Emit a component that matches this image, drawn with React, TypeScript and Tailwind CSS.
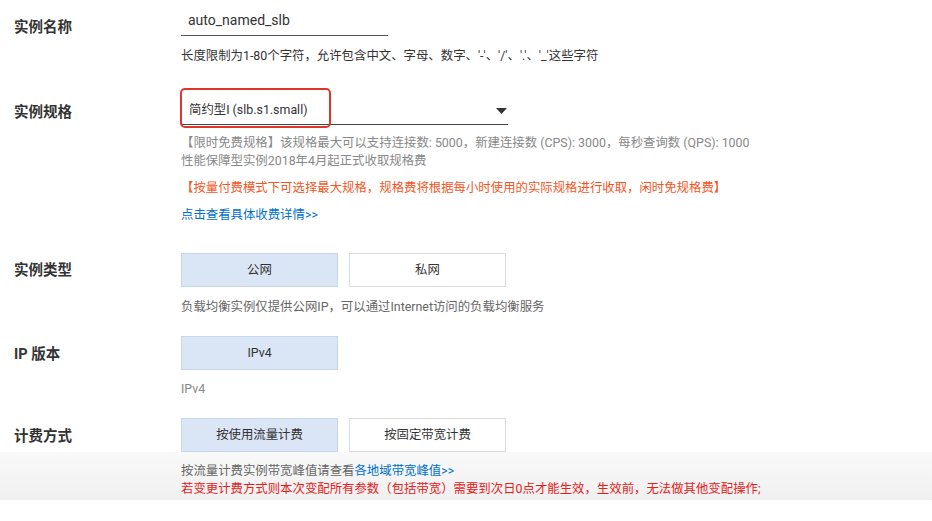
import React from "react";

const font = { fontFamily: 'Roboto, "Noto Sans CJK SC", sans-serif' };

export default function App() {
  return (
    <div className="w-[932px] h-[521px] overflow-hidden bg-white text-[#333]" style={font}>
      {/* 实例名称 */}
      <div className="flex pt-[6px]">
        <div className="w-[181px] shrink-0 pl-[14px] pt-[12px] text-[14.5px] leading-[20px] font-bold text-[#333]">实例名称</div>
        <div className="flex flex-col">
          <div className="w-[207px] h-[30px] border-b border-[#555] flex items-center pl-[7px] text-[14px] text-[#333]">
            auto_named_slb
          </div>
          <div className="mt-[11px] text-[12.4px] leading-[18px] text-[#333]">
            长度限制为1-80个字符，允许包含中文、字母、数字、'-'、'/'、'.'、'_'这些字符
          </div>
        </div>
      </div>

      {/* 实例规格 */}
      <div className="flex mt-[32px]">
        <div className="w-[181px] shrink-0 pl-[14px] pt-[6px] text-[14.5px] leading-[20px] font-bold text-[#333]">实例规格</div>
        <div className="flex flex-col">
          <div className="relative w-[327px] h-[28px] border-b border-[#444] flex items-center justify-between pl-[8px] pr-[1px] text-[12.4px] text-[#333]">
            <span>简约型I (slb.s1.small)</span>
            <svg width="11" height="6" viewBox="0 0 11 6">
              <path d="M0 0 L11 0 L5.5 6 Z" fill="#333" />
            </svg>
            <div className="absolute left-[-1px] top-[-9px] w-[151px] h-[40px] border-2 border-[#e0352b] rounded-[5px]" />
          </div>
          <div className="mt-[9px] text-[12.4px] leading-[18px] text-[#888]">
            【限时免费规格】该规格最大可以支持连接数: 5000，新建连接数 (CPS): 3000，每秒查询数 (QPS): 1000
          </div>
          <div className="text-[12.4px] leading-[18px] text-[#888]">性能保障型实例2018年4月起正式收取规格费</div>
          <div className="mt-[9px] text-[12.4px] leading-[18px] text-[#f5561e]">
            【按量付费模式下可选择最大规格，规格费将根据每小时使用的实际规格进行收取，闲时免规格费】
          </div>
          <div className="mt-[9px] text-[12.4px] leading-[18px] text-[#0070cc]">点击查看具体收费详情&gt;&gt;</div>
        </div>
      </div>

      {/* 实例类型 */}
      <div className="flex mt-[29px]">
        <div className="w-[181px] shrink-0 pl-[14px] pt-[8px] text-[14.5px] leading-[20px] font-bold text-[#333]">实例类型</div>
        <div className="flex flex-col">
          <div className="flex gap-[11px]">
            <div className="w-[157px] h-[34px] flex items-center justify-center bg-[#dae5f6] border border-[#c9d7ec] text-[12.4px] text-[#333]">公网</div>
            <div className="w-[157px] h-[34px] flex items-center justify-center bg-white border border-[#dcdcdc] text-[12.4px] text-[#333]">私网</div>
          </div>
          <div className="mt-[11px] text-[12.4px] leading-[18px] text-[#666]">
            负载均衡实例仅提供公网IP，可以通过Internet访问的负载均衡服务
          </div>
        </div>
      </div>

      {/* IP 版本 */}
      <div className="flex mt-[20px]">
        <div className="w-[181px] shrink-0 pl-[14px] pt-[9px] text-[14.5px] leading-[20px] font-bold text-[#333]">IP 版本</div>
        <div className="flex flex-col">
          <div className="w-[157px] h-[34px] flex items-center justify-center bg-[#dae5f6] border border-[#c9d7ec] text-[12.4px] text-[#333]">IPv4</div>
          <div className="mt-[10px] text-[12.4px] leading-[18px] text-[#888]">IPv4</div>
        </div>
      </div>

      {/* 计费方式 */}
      <div className="flex mt-[20px]">
        <div className="w-[181px] shrink-0 pl-[14px] pt-[9px] text-[14.5px] leading-[20px] font-bold text-[#333]">计费方式</div>
        <div className="flex gap-[11px]">
          <div className="w-[157px] h-[34px] flex items-center justify-center bg-[#dae5f6] border border-[#c9d7ec] text-[12.4px] text-[#333]">按使用流量计费</div>
          <div className="w-[157px] h-[34px] flex items-center justify-center bg-white border border-[#dcdcdc] text-[12.4px] text-[#333]">按固定带宽计费</div>
        </div>
      </div>
      <div className="h-[48px] pl-[181px] pt-[10px] bg-gradient-to-b from-[#f9f9f9] to-[#f0f0f0]">
        <div className="text-[12.4px] leading-[18px] text-[#666]">
          按流量计费实例带宽峰值请查看<span className="text-[#0070cc]">各地域带宽峰值&gt;&gt;</span>
        </div>
        <div className="text-[12.4px] leading-[18px] text-[#e8201b]">
          若变更计费方式则本次变配所有参数（包括带宽）需要到次日0点才能生效，生效前，无法做其他变配操作;
        </div>
      </div>
    </div>
  );
}
